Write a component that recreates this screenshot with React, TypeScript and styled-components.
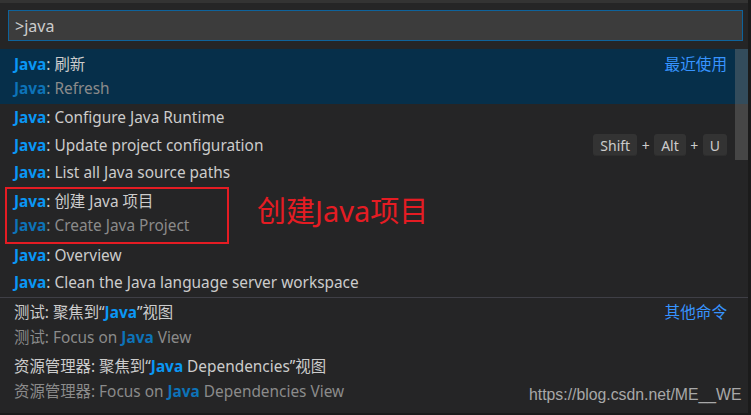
import React from "react";
import styled, { createGlobalStyle } from "styled-components";

const Global = createGlobalStyle`
  html, body { margin: 0; padding: 0; background: #1b1b1b; }
  body { width: 751px; height: 415px; overflow: hidden; }
`;

const FONT = `"Noto Sans", "Noto Sans CJK SC", sans-serif`;

const Widget = styled.div`
  position: relative;
  width: 748px;
  height: 410px;
  background: #252526;
  border-top: 3px solid #333333;
  font-family: ${FONT};
  color: #cccccc;
  display: flex;
  flex-direction: column;
`;

const InputWrap = styled.div`
  padding: 7px 5px 8px 8px;
`;

const Input = styled.div`
  height: 29px;
  border: 1px solid #0e639c;
  background: #3c3c3c;
  display: flex;
  align-items: center;
  padding-left: 6px;
  font-size: 16px;
  color: #cccccc;
`;

const List = styled.div`
  position: relative;
  display: flex;
  flex-direction: column;
`;

const Row = styled.div<{ $double?: boolean; $selected?: boolean; $sep?: boolean }>`
  height: ${(p) => (p.$double ? "55px" : "27.5px")};
  box-sizing: border-box;
  background: ${(p) => (p.$selected ? "#062f4a" : "transparent")};
  border-top: ${(p) => (p.$sep ? "1px solid #3f3f46" : "none")};
  padding: ${(p) => (p.$double ? "1.5px 21px 0 14px" : "0 21px 0 14px")};
  display: flex;
  flex-direction: column;
`;

const Line = styled.div<{ $detail?: boolean; $compact?: boolean }>`
  height: ${(p) => (p.$compact ? "25px" : "27.5px")};
  display: flex;
  align-items: center;
  font-size: 15.4px;
  color: ${(p) => (p.$detail ? "#8b8b8b" : "#cccccc")};
  white-space: nowrap;
`;

const Label = styled.span`
  flex: 1;
`;

const Hl = styled.span<{ $detail?: boolean }>`
  color: ${(p) => (p.$detail ? "#0d73b8" : "#0a97f5")};
  font-weight: 700;
`;

const RightLabel = styled.span`
  color: #3794ff;
  font-size: 15.6px;
`;

const Keys = styled.span`
  display: flex;
  align-items: center;
`;

const Key = styled.span`
  height: 22px;
  box-sizing: border-box;
  padding: 0 7px;
  background: #333333;
  border-radius: 3px;
  display: inline-flex;
  align-items: center;
  font-size: 14px;
  color: #cccccc;
  box-shadow: inset 0 -1px 0 #2d2d2d;
`;

const Plus = styled.span`
  width: 17px;
  text-align: center;
  font-size: 14px;
  color: #cccccc;
`;

const Scrollbar = styled.div`
  position: absolute;
  right: 0;
  top: 0;
  width: 13px;
  height: 111px;
  background: rgba(121, 121, 121, 0.4);
`;

const Annotation = styled.div`
  position: absolute;
  left: 5px;
  top: 184px;
  width: 220px;
  height: 53px;
  border: 2px solid #e51c23;
`;

const AnnotationText = styled.div`
  position: absolute;
  left: 257px;
  top: 190px;
  font-family: "Noto Sans", "Noto Sans CJK SC", sans-serif;
  font-size: 29px;
  line-height: 36px;
  color: #e51c23;
  white-space: nowrap;
`;

const Watermark = styled.div`
  position: absolute;
  left: 529px;
  top: 383px;
  font-family: "Liberation Sans", Arial, sans-serif;
  font-size: 15.8px;
  color: #a8a8a8;
  white-space: nowrap;
`;

const J = ({ d }: { d?: boolean }) => <Hl $detail={d}>Java</Hl>;

export default function App() {
  return (
    <>
      <Global />
      <Widget>
        <InputWrap>
          <Input>&gt;java</Input>
        </InputWrap>
        <List>
          <Row $double $selected>
            <Line $compact>
              <Label>
                <J />: 刷新
              </Label>
              <RightLabel>最近使用</RightLabel>
            </Line>
            <Line $compact $detail>
              <Label>
                <J d />: Refresh
              </Label>
            </Line>
          </Row>
          <Row>
            <Line>
              <Label>
                <J />: Configure Java Runtime
              </Label>
            </Line>
          </Row>
          <Row>
            <Line>
              <Label>
                <J />: Update project configuration
              </Label>
              <Keys>
                <Key>Shift</Key>
                <Plus>+</Plus>
                <Key>Alt</Key>
                <Plus>+</Plus>
                <Key>U</Key>
              </Keys>
            </Line>
          </Row>
          <Row>
            <Line>
              <Label>
                <J />: List all Java source paths
              </Label>
            </Line>
          </Row>
          <Row $double>
            <Line $compact>
              <Label>
                <J />: 创建 Java 项目
              </Label>
            </Line>
            <Line $compact $detail>
              <Label>
                <J d />: Create Java Project
              </Label>
            </Line>
          </Row>
          <Row>
            <Line>
              <Label>
                <J />: Overview
              </Label>
            </Line>
          </Row>
          <Row>
            <Line>
              <Label>
                <J />: Clean the Java language server workspace
              </Label>
            </Line>
          </Row>
          <Row $double $sep>
            <Line $compact>
              <Label>
                测试: 聚焦到“<J />”视图
              </Label>
              <RightLabel>其他命令</RightLabel>
            </Line>
            <Line $compact $detail>
              <Label>
                测试: Focus on <J d /> View
              </Label>
            </Line>
          </Row>
          <Row $double>
            <Line $compact>
              <Label>
                资源管理器: 聚焦到“<J /> Dependencies”视图
              </Label>
            </Line>
            <Line $compact $detail>
              <Label>
                资源管理器: Focus on <J d /> Dependencies View
              </Label>
            </Line>
          </Row>
          <Scrollbar />
        </List>
        <Annotation />
        <AnnotationText>创建Java项目</AnnotationText>
        <Watermark>https://blog.csdn.net/ME__WE</Watermark>
      </Widget>
    </>
  );
}
